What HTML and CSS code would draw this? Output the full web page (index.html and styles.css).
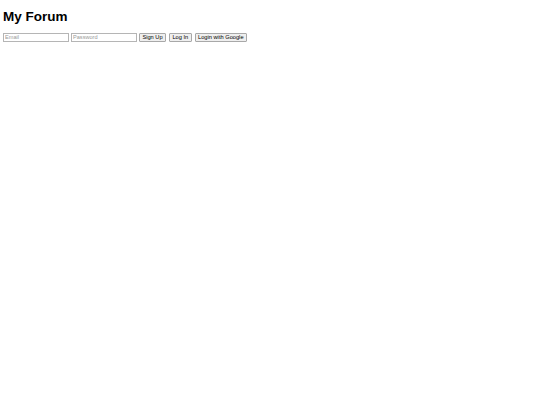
FILE: index.html
```html
<!DOCTYPE html>
<html>
<head>
<meta charset="utf-8">
<title>My Forum</title>
<link rel="stylesheet" href="styles.css">
</head>
<body>
<h1 class="title">My Forum</h1>
<div class="auth">
  <input class="field" type="email" placeholder="Email">
  <input class="field" type="password" placeholder="Password">
  <button class="btn">Sign Up</button>
  <button class="btn">Log In</button>
  <button class="btn">Login with Google</button>
</div>
</body>
</html>
```
FILE: styles.css
```css
html, body { background: #fff; }
body {
  margin: 3px;
  font-family: "Liberation Sans", Arial, sans-serif;
  color: #000;
}
.title {
  font-size: 13.5px;
  font-weight: bold;
  margin: 6px 0 8px;
  line-height: 15.5px;
}
.auth {
  display: flex;
  align-items: center;
  gap: 2px;
}
.field {
  width: 62px;
  height: 5px;
  padding: 1px 1px;
  border: 1px solid #b5b5b5;
  font-family: "Liberation Sans", Arial, sans-serif;
  font-size: 5.6px;
  margin: 0;
}
.field::placeholder { color: #999; }
.btn {
  font-family: "Liberation Sans", Arial, sans-serif;
  font-size: 5.7px;
  padding: 1px 2.4px;
  height: 9px;
  line-height: 5px;
  margin: 0;
  border: 1px solid #a8a8a8;
  border-radius: 1px;
  background: #efefef;
  color: #000;
}
.btn + .btn { margin-left: 1px; }
```
